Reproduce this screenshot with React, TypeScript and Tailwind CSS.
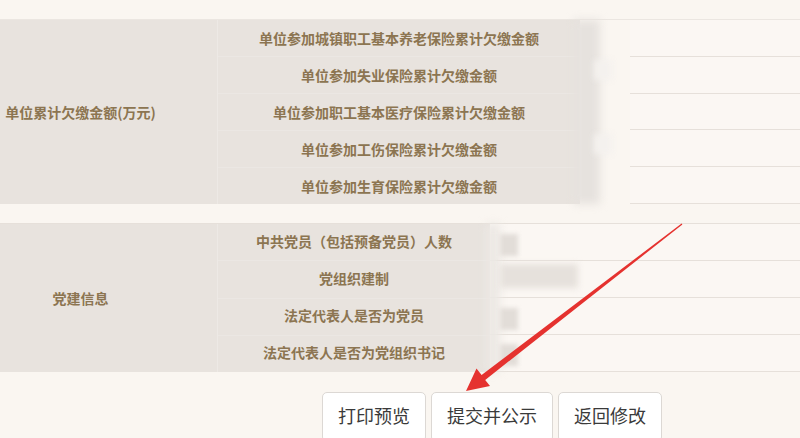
import React from "react";

const arrearsRows = [
  "单位参加城镇职工基本养老保险累计欠缴金额",
  "单位参加失业保险累计欠缴金额",
  "单位参加职工基本医疗保险累计欠缴金额",
  "单位参加工伤保险累计欠缴金额",
  "单位参加生育保险累计欠缴金额",
];

const partyRows = [
  "中共党员（包括预备党员）人数",
  "党组织建制",
  "法定代表人是否为党员",
  "法定代表人是否为党组织书记",
];

const Arrow: React.FC = () => (
  <svg
    className="absolute left-0 top-0 pointer-events-none"
    width="800"
    height="438"
    viewBox="0 0 800 438"
  >
    <polygon
      points="466,391 490,386 485.2,379.9 682.4,224.5 681.6,223.5 481.6,375.1 476.5,368.6"
      fill="#e5322f"
    />
  </svg>
);

const Buttons: React.FC = () => (
  <div className="flex gap-[5px] ml-[322px] mt-[20px]">
    {["打印预览", "提交并公示", "返回修改"].map((t) => (
      <button
        key={t}
        className="h-[50px] px-[15px] border border-[#dcd8d4] rounded-[5px] bg-white text-[18px] leading-none text-[#3a3a3a] pb-[4px]"
      >
        {t}
      </button>
    ))}
  </div>
);

export default function App() {
  return (
    <div
      className="relative w-[800px] h-[438px] overflow-hidden bg-[#faf6f1] pt-[19px]"
      style={{ fontFamily: '"Noto Sans CJK SC", "Noto Sans", sans-serif' }}
    >
      {/* 欠缴金额 */}
      <div className="flex h-[185px] border-t border-[#ebe6e1]">
        <div className="w-[218px] bg-[#e8e3de] flex items-center justify-center pr-[56px] border-r border-[#ede9e5]">
          <span className="text-[14px] font-bold text-[#8c7551]">单位累计欠缴金额(万元)</span>
        </div>
        <div className="w-[362px] bg-[#e8e3de] flex flex-col">
          {arrearsRows.map((r, i) => (
            <div
              key={r}
              className={`flex-1 flex items-center justify-center ${i > 0 ? "border-t border-[#ebe7e3]" : ""}`}
            >
              <span className="text-[14px] font-bold text-[#8c7551]">{r}</span>
            </div>
          ))}
        </div>
        <div className="w-[50px] relative">
          <div className="absolute left-[-6px] top-0 w-[26px] h-[184px] bg-[#e6e2de] blur-[4px]" />
          <div className="absolute left-[14px] top-[40px] w-[18px] h-[20px] bg-[#f4f1ee] blur-[3px]" />
          <div className="absolute left-[14px] top-[114px] w-[18px] h-[20px] bg-[#f4f1ee] blur-[3px]" />
        </div>
        <div className="flex-1 flex flex-col bg-[#fbf7f3]">
          {arrearsRows.map((r) => (
            <div key={r} className="flex-1 border-b border-[#e6e0da]" />
          ))}
        </div>
      </div>

      {/* 党建信息 */}
      <div className="flex h-[149px] mt-[19px] border-t border-[#e6e0da]">
        <div className="w-[218px] bg-[#e8e3de] flex items-center justify-center pr-[56px] border-r border-[#ede9e5]">
          <span className="text-[14px] font-bold text-[#8c7551]">党建信息</span>
        </div>
        <div className="w-[272px] bg-[#e8e3de] flex flex-col">
          {partyRows.map((r, i) => (
            <div
              key={r}
              className={`flex-1 flex items-center justify-center pb-[2px] ${i > 0 ? "border-t border-[#ebe7e3]" : ""}`}
            >
              <span className="text-[14px] font-bold text-[#8c7551]">{r}</span>
            </div>
          ))}
        </div>
        <div className="flex-1 flex flex-col bg-[#fbf7f3] relative">
          {partyRows.map((r) => (
            <div key={r} className="flex-1 border-b border-[#e6e0da]" />
          ))}
          <div className="absolute left-[-4px] top-0 w-[14px] h-[148px] bg-[#ece8e4] blur-[4px]" />
          <div className="absolute left-[10px] top-[10px] w-[18px] h-[22px] bg-[#e2ddd8] blur-[2px]" />
          <div className="absolute left-[10px] top-[40px] w-[78px] h-[24px] bg-[#e6e1dc] blur-[3px]" />
          <div className="absolute left-[10px] top-[84px] w-[18px] h-[22px] bg-[#e2ddd8] blur-[2px]" />
          <div className="absolute left-[10px] top-[120px] w-[18px] h-[22px] bg-[#e2ddd8] blur-[2px]" />
        </div>
      </div>

      <Buttons />
      <Arrow />
    </div>
  );
}
